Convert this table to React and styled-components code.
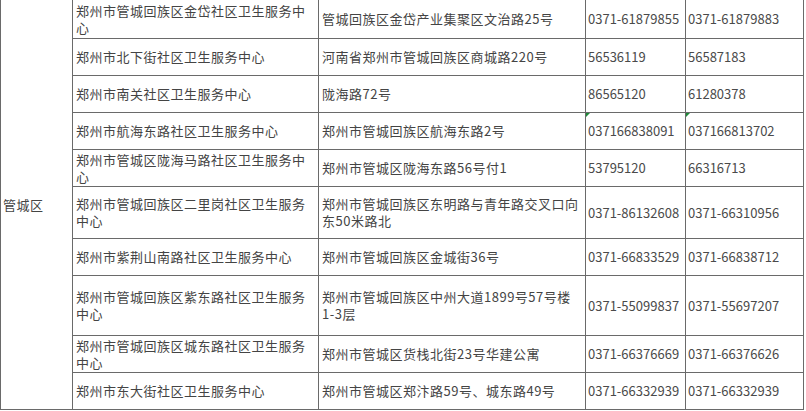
import React from 'react';
import styled, { createGlobalStyle } from 'styled-components';

const GlobalStyle = createGlobalStyle`
  html, body {
    margin: 0;
    padding: 0;
    background: #ffffff;
  }
  body {
    font-family: "Noto Sans CJK SC", "Noto Sans", sans-serif;
    color: #444;
  }
`;

const widths = [72, 246, 267, 100, 118];

const rows = [
  { h: 38, name: ['郑州市管城回族区金岱社区卫生服务中', '心'], addr: ['管城回族区金岱产业集聚区文治路25号'], tel1: '0371-61879855', tel2: '0371-61879883' },
  { h: 37, name: ['郑州市北下街社区卫生服务中心'], addr: ['河南省郑州市管城回族区商城路220号'], tel1: '56536119', tel2: '56587183' },
  { h: 37, name: ['郑州市南关社区卫生服务中心'], addr: ['陇海路72号'], tel1: '86565120', tel2: '61280378' },
  { h: 37, name: ['郑州市航海东路社区卫生服务中心'], addr: ['郑州市管城回族区航海东路2号'], tel1: '037166838091', tel2: '037166813702', flag: true },
  { h: 37, name: ['郑州市管城区陇海马路社区卫生服务中', '心'], addr: ['郑州市管城区陇海东路56号付1'], tel1: '53795120', tel2: '66316713' },
  { h: 52, name: ['郑州市管城回族区二里岗社区卫生服务', '中心'], addr: ['郑州市管城回族区东明路与青年路交叉口向', '东50米路北'], tel1: '0371-86132608', tel2: '0371-66310956' },
  { h: 37, name: ['郑州市紫荆山南路社区卫生服务中心'], addr: ['郑州市管城回族区金城街36号'], tel1: '0371-66833529', tel2: '0371-66838712' },
  { h: 60, name: ['郑州市管城回族区紫东路社区卫生服务', '中心'], addr: ['郑州市管城回族区中州大道1899号57号楼', '1-3层'], tel1: '0371-55099837', tel2: '0371-55697207' },
  { h: 37, name: ['郑州市管城回族区城东路社区卫生服务', '中心'], addr: ['郑州市管城区货栈北街23号华建公寓'], tel1: '0371-66376669', tel2: '0371-66376626' },
  { h: 37, name: ['郑州市东大街社区卫生服务中心'], addr: ['郑州市管城区郑汴路59号、城东路49号'], tel1: '0371-66332939', tel2: '0371-66332939' },
];

const Table = styled.table`
  border-collapse: collapse;
  table-layout: fixed;
  width: 804px;
  font-size: 13px;
  font-weight: 400;
  line-height: 17px;
`;

const Col = styled.col`
  width: ${(p) => p.$w}px;
`;

const Row = styled.tr`
  height: ${(p) => p.$h}px;
  &:first-child td {
    border-top: none;
  }
`;

const Cell = styled.td`
  position: relative;
  border: 1px solid #6a6a6a;
  padding: 0 0 0 ${(p) => p.$pad || 3}px;
  vertical-align: middle;
  white-space: nowrap;
  overflow: hidden;
  letter-spacing: 0.5px;
`;

const NumCell = styled(Cell)`
  padding-left: 2px;
  letter-spacing: 0;
  color: #4a4a4a;
`;

const Flag = styled.span`
  position: absolute;
  left: 0;
  top: 0;
  width: 0;
  height: 0;
  border-top: 4px solid #1f8a3a;
  border-right: 4px solid transparent;
`;

const Lines = ({ lines }) =>
  lines.map((l, i) => (
    <React.Fragment key={i}>
      {i > 0 && <br />}
      {l}
    </React.Fragment>
  ));

export default function App() {
  return (
    <>
      <GlobalStyle />
      <Table>
        <colgroup>
          {widths.map((w, i) => (
            <Col key={i} $w={w} />
          ))}
        </colgroup>
        <tbody>
          {rows.map((r, i) => (
            <Row key={i} $h={r.h}>
              {i === 0 && (
                <Cell rowSpan={rows.length} $pad={2}>
                  管城区
                </Cell>
              )}
              <Cell>
                <Lines lines={r.name} />
              </Cell>
              <Cell>
                <Lines lines={r.addr} />
              </Cell>
              <NumCell>
                {r.flag && <Flag />}
                {r.tel1}
              </NumCell>
              <NumCell>
                {r.flag && <Flag />}
                {r.tel2}
              </NumCell>
            </Row>
          ))}
        </tbody>
      </Table>
    </>
  );
}
